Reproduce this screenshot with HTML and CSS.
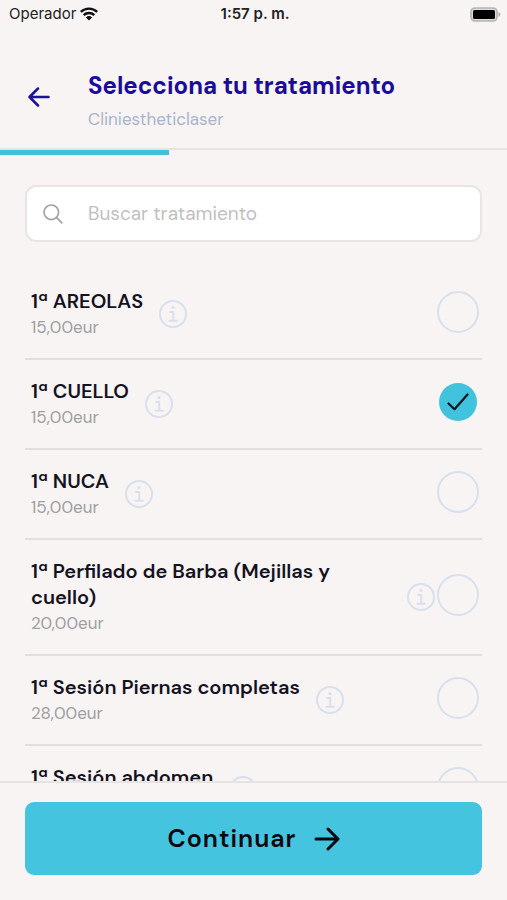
FILE: index.html
```
<!DOCTYPE html>
<html lang="es">
<head>
  <meta charset="UTF-8">
  <meta name="viewport" content="width=device-width, initial-scale=1.0">
  <title>Selecciona tu tratamiento</title>
  <link rel="stylesheet" href="styles.css">
</head>
<body>
  <!-- Iconos compartidos -->
  <svg class="sprite" aria-hidden="true">
    <symbol id="icon-info" viewBox="0 0 28 28">
      <circle cx="14" cy="14" r="13" fill="none" stroke="currentColor" stroke-width="2"/>
      <circle cx="14" cy="7.5" r="1.6" fill="currentColor"/>
      <path d="M11 12h3.200v8.600M10.300 20.800h7.600" fill="none" stroke="currentColor" stroke-width="2" stroke-linecap="round" stroke-linejoin="round"/>
    </symbol>
  </svg>

  <div class="app">
    <div class="status-bar">
      <div class="status-carrier">
        <span>Operador</span>
        <svg width="18" height="14" viewBox="0 0 18 14" fill="none" stroke="#111" stroke-width="2.4">
          <path d="M.8 4.9a11.8 11.8 0 0 1 16.4 0M3.7 8.1a7.6 7.6 0 0 1 10.6 0"/>
          <path d="M9 13.6 5.9 10.4a4.4 4.4 0 0 1 6.2 0z" fill="#111" stroke="none"/>
        </svg>
      </div>
      <span class="status-time">1:57 p. m.</span>
      <div class="status-battery">
        <svg width="31" height="15" viewBox="0 0 31 15">
          <rect x="1" y="1" width="26" height="13" rx="4" fill="#dedbdb" stroke="#b5b2b2" stroke-width="1.6"/>
          <rect x="3" y="3" width="22" height="9" rx="1.5" fill="#000"/>
          <path d="M28.4 5v5c1.2-.5 2-1.4 2-2.5s-.8-2-2-2.5z" fill="#b5b2b2"/>
        </svg>
      </div>
    </div>

    <header class="header">
      <button class="back" type="button" aria-label="Volver">
        <svg width="22" height="20" viewBox="0 0 22 20" fill="none" stroke="currentColor" stroke-width="2.5" stroke-linecap="round" stroke-linejoin="round">
          <path d="M20.500 10H1.500M10 1.500 1.500 10l8.500 8.500"/>
        </svg>
      </button>
      <div>
        <h1 class="title">Selecciona tu tratamiento</h1>
        <p class="subtitle">Cliniestheticlaser</p>
      </div>
    </header>
    <div class="progress"><div class="progress-value" style="width: 33.4%"></div></div>

    <main class="content">
      <label class="search">
        <svg width="20" height="20" viewBox="0 0 20 20" fill="none" stroke="#a3a3a5" stroke-width="1.7" stroke-linecap="round">
          <circle cx="8.300" cy="8.300" r="7.300"/>
          <path d="m13.600 13.600 5.200 5.200"/>
        </svg>
        <input type="text" placeholder="Buscar tratamiento" aria-label="Buscar tratamiento">
      </label>

      <ul class="list">
        <li class="item">
          <label class="item-text" for="t1">
            <span class="item-name">1ª AREOLAS</span>
            <span class="item-price">15,00eur</span>
          </label>
          <button class="info" type="button" aria-label="Información"><svg><use href="#icon-info"/></svg></button>
          <input class="check" type="checkbox" id="t1">
        </li>
        <li class="item">
          <label class="item-text" for="t2">
            <span class="item-name">1ª CUELLO</span>
            <span class="item-price">15,00eur</span>
          </label>
          <button class="info" type="button" aria-label="Información"><svg><use href="#icon-info"/></svg></button>
          <span class="check-wrap">
            <input class="check" type="checkbox" id="t2" checked>
            <svg class="check-mark" width="22" height="18" viewBox="0 0 22 18" fill="none" stroke="#07141f" stroke-width="2.2" stroke-linecap="round" stroke-linejoin="round">
              <path d="M1.500 10.500 7.500 16.200 20.500 1.500"/>
            </svg>
          </span>
        </li>
        <li class="item">
          <label class="item-text" for="t3">
            <span class="item-name">1ª NUCA</span>
            <span class="item-price">15,00eur</span>
          </label>
          <button class="info" type="button" aria-label="Información"><svg><use href="#icon-info"/></svg></button>
          <input class="check" type="checkbox" id="t3">
        </li>
        <li class="item">
          <label class="item-text" for="t4">
            <span class="item-name">1ª Perfilado de Barba (Mejillas y cuello)</span>
            <span class="item-price">20,00eur</span>
          </label>
          <button class="info" type="button" aria-label="Información"><svg><use href="#icon-info"/></svg></button>
          <input class="check" type="checkbox" id="t4">
        </li>
        <li class="item">
          <label class="item-text" for="t5">
            <span class="item-name">1ª Sesión Piernas completas</span>
            <span class="item-price">28,00eur</span>
          </label>
          <button class="info" type="button" aria-label="Información"><svg><use href="#icon-info"/></svg></button>
          <input class="check" type="checkbox" id="t5">
        </li>
        <li class="item">
          <label class="item-text" for="t6">
            <span class="item-name">1ª Sesión abdomen</span>
          </label>
          <button class="info" type="button" aria-label="Información"><svg><use href="#icon-info"/></svg></button>
          <input class="check" type="checkbox" id="t6">
        </li>
      </ul>
    </main>

    <footer class="footer">
      <button class="continue" type="button">
        <span>Continuar</span>
        <svg width="26" height="24" viewBox="0 0 26 24" fill="none" stroke="currentColor" stroke-width="3" stroke-linecap="round" stroke-linejoin="round">
          <path d="M2 12h22M14 2l10 10-10 10"/>
        </svg>
      </button>
    </footer>
  </div>
</body>
</html>
```
FILE: styles.css
```
* {
  box-sizing: border-box;
}
body {
  margin: 0;
  background: #f8f4f4;
  color: #14121f;
  font-family: "DM Sans", Inter, sans-serif;
}
button {
  padding: 0;
  border: none;
  background: none;
  font-family: inherit;
  cursor: pointer;
}
svg {
  display: block;
}
.sprite {
  display: none;
}
.app {
  display: flex;
  flex-direction: column;
  height: 100vh;
}

/* Barra de estado */
.status-bar {
  display: grid;
  grid-template-columns: 1fr auto 1fr;
  align-items: center;
  height: 28px;
  padding: 0 6px 0 9px;
  font-family: Inter, sans-serif;
  font-size: 15px;
  line-height: 18px;
  color: #222;
}
.status-carrier {
  display: flex;
  align-items: center;
  gap: 4px;
}
.status-time {
  font-weight: 600;
}
.status-battery {
  justify-self: end;
}

/* Cabecera */
.header {
  display: flex;
  align-items: flex-start;
  padding: 40px 25px 14px 28px;
  border-bottom: 2px solid #e7e3e3;
}
.back {
  width: 60px;
  height: 58px;
  flex: none;
  color: #1d0fa0;
}
.title {
  margin: 0;
  font-size: 24px;
  line-height: 36px;
  font-weight: 700;
  color: #1a0b9c;
}
.subtitle {
  margin: 0;
  font-size: 17px;
  line-height: 30px;
  color: #a7b4cd;
}
.progress {
  height: 5px;
}
.progress-value {
  height: 100%;
  background: #44bfd8;
}

/* Buscador y lista */
.content {
  flex: 1;
  min-height: 0;
  padding: 30px 25px 0;
  overflow: hidden;
}
.search {
  display: flex;
  align-items: center;
  gap: 25px;
  height: 57px;
  padding: 0 16px;
  border: 2px solid #e9e5e4;
  border-radius: 11px;
  background: #fff;
}
.search input {
  flex: 1;
  min-width: 0;
  padding: 0;
  border: none;
  outline: none;
  background: none;
  font-family: inherit;
  font-size: 19px;
  color: #14121f;
}
.search input::placeholder {
  color: #bfbfc2;
}
.list {
  margin: 28px 0 0;
  padding: 0;
  list-style: none;
}
.item {
  display: flex;
  align-items: center;
  padding: 18px 3px 18px 6px;
  border-bottom: 2px solid #e3dfdf;
}
.item-text {
  display: flex;
  flex-direction: column;
  min-height: 52px;
  margin-right: 16px;
  line-height: 26px;
}
.item-name {
  font-size: 20px;
  font-weight: 600;
}
.item-price {
  font-size: 17px;
  color: #a09fa1;
}
.info {
  flex: none;
  margin-right: 2px;
  color: #d9e0ed;
}
.info svg {
  width: 28px;
  height: 28px;
}
.check {
  flex: none;
  appearance: none;
  width: 42px;
  height: 42px;
  margin: 0 0 4px auto;
  border: 2px solid #d9e0ed;
  border-radius: 50%;
}
.check:checked {
  border-color: transparent;
  background: #42c3dd;
  background-clip: padding-box;
}
.check-wrap {
  position: relative;
  display: flex;
  margin-left: auto;
}
.check-mark {
  position: absolute;
  top: 12px;
  left: 10px;
  pointer-events: none;
}

/* Pie */
.footer {
  padding: 19px 25px 25px;
  border-top: 2px solid #e7e3e3;
}
.continue {
  display: flex;
  align-items: center;
  justify-content: center;
  gap: 17px;
  width: 100%;
  height: 73px;
  border-radius: 9px;
  background: #44c4df;
  color: #05080c;
  font-size: 25px;
  font-weight: 600;
  letter-spacing: 1px;
}
```
